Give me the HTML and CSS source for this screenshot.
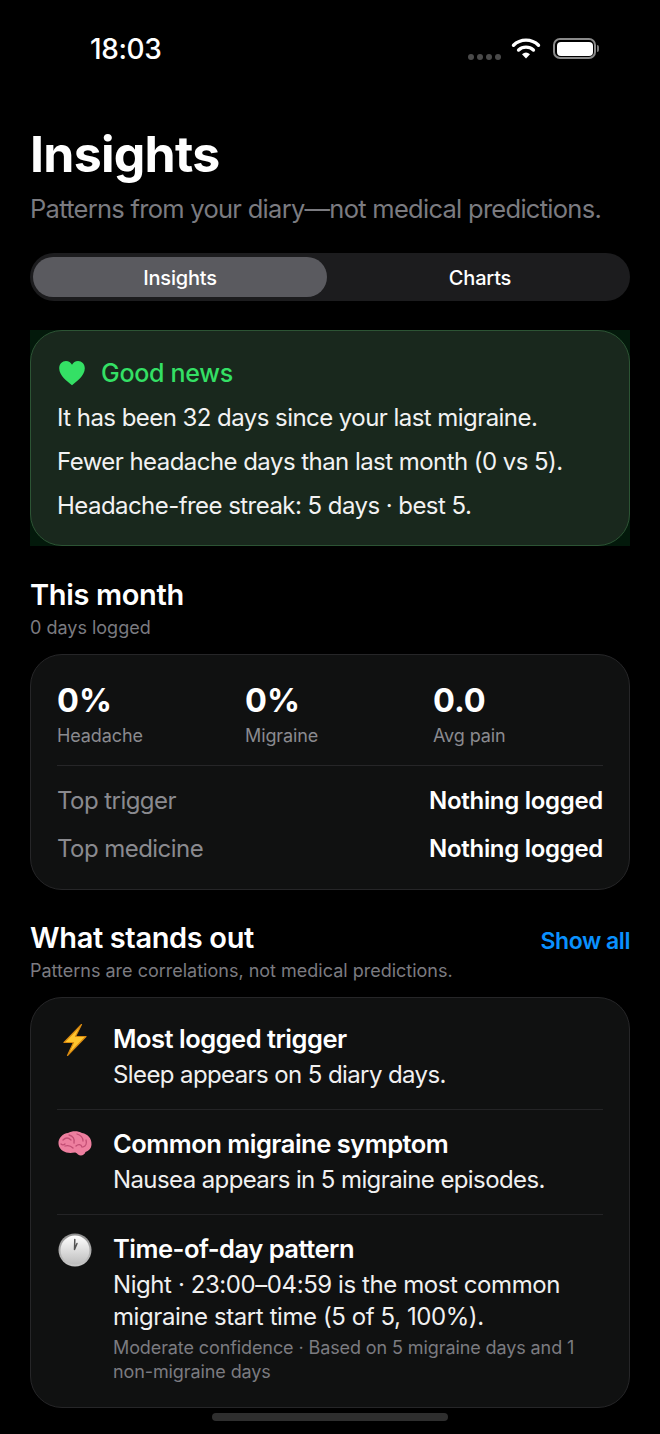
FILE: index.html
```html
<!DOCTYPE html>
<html lang="en">
<head>
<meta charset="utf-8">
<title>Insights</title>
<link rel="stylesheet" href="styles.css">
</head>
<body>
<div class="screen">
  <div class="status">
    <span class="time">18:03</span>
    <div class="status-icons">
      <div class="dots"><i></i><i></i><i></i><i></i></div>
      <svg class="wifi" width="30" height="22" viewBox="0 0 30 22"><path d="M2.5 8.2a18 18 0 0 1 25 0" fill="none" stroke="#fff" stroke-width="3.4" stroke-linecap="round"/><path d="M7.6 13a11 11 0 0 1 14.8 0" fill="none" stroke="#fff" stroke-width="3.4" stroke-linecap="round"/><path d="M11 17.2q4-3.2 8 0L15 21.4z" fill="#fff"/></svg>
      <div class="battery"><div class="battery-body"><div class="battery-fill"></div></div><div class="battery-cap"></div></div>
    </div>
  </div>

  <h1 class="title">Insights</h1>
  <p class="subtitle">Patterns from your diary—not medical predictions.</p>

  <div class="segments">
    <div class="segment active">Insights</div>
    <div class="segment">Charts</div>
  </div>

  <div class="news-wrap">
    <section class="news">
      <div class="news-head">
        <svg class="heart" width="28" height="26" viewBox="0 0 28 26"><path d="M14 25.2C9.5 21.6 1.2 15.6 1.2 8.2 1.2 4 4.3 1 8 1c2.700 0 4.800 1.400 6 3.700C15.200 2.400 17.300 1 20 1c3.700 0 6.800 3 6.800 7.200 0 7.400-8.300 13.400-12.800 17z" fill="#34e065"/></svg>
        <span>Good news</span>
      </div>
      <p>It has been 32 days since your last migraine.</p>
      <p>Fewer headache days than last month (0 vs 5).</p>
      <p>Headache-free streak: 5 days · best 5.</p>
    </section>
  </div>

  <h2 class="section-title month-title">This month</h2>
  <p class="section-note">0 days logged</p>
  <section class="card month">
    <div class="stats">
      <div class="stat"><b>0%</b><span>Headache</span></div>
      <div class="stat"><b>0%</b><span>Migraine</span></div>
      <div class="stat"><b>0.0</b><span>Avg pain</span></div>
    </div>
    <div class="kv first"><span>Top trigger</span><b>Nothing logged</b></div>
    <div class="kv"><span>Top medicine</span><b>Nothing logged</b></div>
  </section>

  <div class="section-row">
    <h2 class="section-title">What stands out</h2>
    <span class="show-all">Show all</span>
  </div>
  <p class="section-note">Patterns are correlations, not medical predictions.</p>
  <section class="card stands">
    <div class="item">
      <svg class="emoji" width="36" height="36" viewBox="0 0 36 36"><path d="M24.500 2.500 7 20.500h9.500L10.500 33.500 29 14.500H18.500z" fill="#ffc62e" stroke="#d98a10" stroke-width="1.200" stroke-linejoin="round"/></svg>
      <div class="item-text"><h3>Most logged trigger</h3><p>Sleep appears on 5 diary days.</p></div>
    </div>
    <div class="item">
      <svg class="emoji" width="36" height="36" viewBox="0 0 36 36"><path d="M1.500 17C1 11 6 6.500 11 6c4-2.500 10-2.500 14 0 6 1 9.800 5.500 9.500 11.500-.3 4.500-3 6.500-6 7.500-1 3.500-5 4.500-7.500 2.500-1-1-1.500-2-3-2-5 1-9 .5-12-1.500C3.500 22.500 1.800 20 1.500 17z" fill="#ee7f9f"/><path d="M6 13c3-3 6-2 8 0M12 8c4 1 6 4 5 8M20 7c3 1 6 3 6 7M29 13c1 3 0 6-3 7M8 19c3-1 6 0 8 2M19 19c2-2 5-2 6 1M4 17c1 1 3 1 4 0" fill="none" stroke="#c24e74" stroke-width="1.300" stroke-linecap="round"/></svg>
      <div class="item-text"><h3>Common migraine symptom</h3><p>Nausea appears in 5 migraine episodes.</p></div>
    </div>
    <div class="item">
      <svg class="emoji" width="36" height="36" viewBox="0 0 36 36"><defs><linearGradient id="rim" x1="0" y1="0" x2="0" y2="1"><stop offset="0" stop-color="#8f8f8f"/><stop offset="1" stop-color="#c9c9c9"/></linearGradient><linearGradient id="dial" x1="0" y1="0" x2="0" y2="1"><stop offset="0" stop-color="#fff"/><stop offset="1" stop-color="#bdbdbd"/></linearGradient></defs><circle cx="18" cy="18" r="16.500" fill="url(#rim)"/><circle cx="18" cy="18" r="14.500" fill="url(#dial)"/><path d="M17.500 17.500 17.800 7.500M17.500 17.500 20 11.500" stroke="#555" stroke-width="1.500" stroke-linecap="round" fill="none"/></svg>
      <div class="item-text"><h3>Time-of-day pattern</h3><p>Night · 23:00–04:59 is the most common migraine start time (5 of 5, 100%).</p><small>Moderate confidence · Based on 5 migraine days and 1 non-migraine days</small></div>
    </div>
  </section>
  <div class="home-bar"></div>
</div>
</body>
</html>
```

FILE: styles.css
```css
* { box-sizing: border-box; margin: 0; padding: 0; }
html, body { background: #000; }
body { font-family: Inter, "Liberation Sans", sans-serif; color: #fff; width: 660px; height: 1434px; overflow: hidden; }
.screen { padding: 0 30px 0 31px; display: flex; flex-direction: column; height: 1434px; }

.status { display: flex; justify-content: space-between; align-items: center; height: 44px; margin-top: 27px; padding: 0 31px 0 59px; }
.time { font-size: 28px; font-weight: 500; letter-spacing: -0.4px; }
.status-icons { display: flex; align-items: center; margin-top: -1px; }
.dots { display: flex; gap: 3px; margin-top: 16px; margin-right: 10px; }
.dots i { width: 6px; height: 6px; border-radius: 50%; background: #4a4a4a; display: block; }
.wifi { margin-top: -2px; margin-right: 12px; }
.battery { display: flex; align-items: center; gap: 1px; }
.battery-body { width: 43px; height: 21px; border: 2px solid #8a8a8a; border-radius: 7px; padding: 1.500px; }
.battery-fill { width: 100%; height: 100%; background: #fff; border-radius: 4px; }
.battery-cap { width: 2px; height: 7px; background: #7a7a7a; border-radius: 0 2px 2px 0; }

.title { font-size: 50px; font-weight: 700; line-height: 58px; margin-top: 54px; margin-left: -1px; letter-spacing: -0.75px; }
.subtitle { font-size: 25.500px; line-height: 34px; margin-top: 9px; color: #7b7b80; letter-spacing: -0.72px; white-space: nowrap; margin-left: -1px; }

.segments { display: flex; margin-top: 27px; margin-left: -1px; height: 48px; padding: 4px 3px; background: #1c1c1e; border-radius: 24px; }
.segment { flex: 1; display: flex; align-items: center; justify-content: center; padding-top: 1px; font-size: 20px; font-weight: 500; letter-spacing: -0.2px; }
.segment.active { flex: 0 0 294px; background: #5a5a5f; border-radius: 20px; margin-right: 6px; }

.news-wrap { margin-top: 29px; margin-left: -1px; background: #03190b; }
.news { height: 216px; padding: 26px 26px 0 26px; border: 1px solid #2c5434; border-radius: 32px; background: #19281d; }
.news-head { display: flex; align-items: center; gap: 15px; color: #34e065; font-size: 25px; font-weight: 500; height: 32px; letter-spacing: -0.3px; margin-bottom: 7px; }
.news .heart { margin-left: 1px; }
.news p { font-size: 24px; line-height: 44px; letter-spacing: -0.55px; color: #f2f2f2; white-space: nowrap; }

.section-title { font-size: 29px; font-weight: 600; line-height: 36px; letter-spacing: -0.35px; margin-left: -1px; }
.month-title { margin-top: 31px; }
.section-note { font-size: 18px; line-height: 24px; color: #7b7b80; margin-left: -1px; margin-top: 3px; }

.card { background: #101111; border: 1px solid #262628; border-radius: 32px; margin-left: -1px; }
.month { margin-top: 14px; height: 236px; padding: 24px 26px 0 26px; }
.stats { display: grid; grid-template-columns: 188px 188px 1fr; height: 87px; border-bottom: 1px solid #262628; }
.stat b { display: block; font-size: 32.500px; font-weight: 700; line-height: 44px; }
.stat span { display: block; font-size: 18px; line-height: 24px; color: #8a8a8f; margin-top: 1px; letter-spacing: -0.1px; }
.kv { display: flex; justify-content: space-between; align-items: center; height: 48px; font-size: 24px; letter-spacing: -0.55px; }
.kv.first { margin-top: 10px; }
.kv span { color: #8a8a8f; }
.kv b { font-weight: 600; letter-spacing: -0.3px; }

.section-row { display: flex; justify-content: space-between; align-items: flex-end; margin-top: 30px; }
.show-all { color: #0a91ff; font-size: 23px; font-weight: 600; line-height: 30px; letter-spacing: -0.45px; }
.stands { margin-top: 14px; height: 411px; padding: 0 26px; }
.item { display: flex; gap: 20px; padding-top: 24px; height: 112px; border-bottom: 1px solid #242426; margin-bottom: -1px; padding-bottom: 0; }
.item:nth-child(2) { height: 106px; padding-top: 18px; }
.item:last-child { border-bottom: 0; padding-top: 18px; height: auto; }
.emoji { flex: 0 0 36px; }
.item-text { flex: 1; min-width: 0; }
.item h3 { font-size: 25.500px; font-weight: 600; line-height: 34px; letter-spacing: -0.5px; }
.item p { font-size: 24px; line-height: 32px; letter-spacing: -0.6px; margin-top: 3px; color: #f0f0f0; }
.item:last-child p { letter-spacing: -0.42px; }
.item small { display: block; font-size: 18px; line-height: 24px; color: #7b7b80; margin-top: 3px; letter-spacing: -0.1px; }

.home-bar { width: 236px; height: 8px; background: #2e2e2e; border-radius: 4px; margin: 5px auto 0; position: relative; left: -1px; }
```
